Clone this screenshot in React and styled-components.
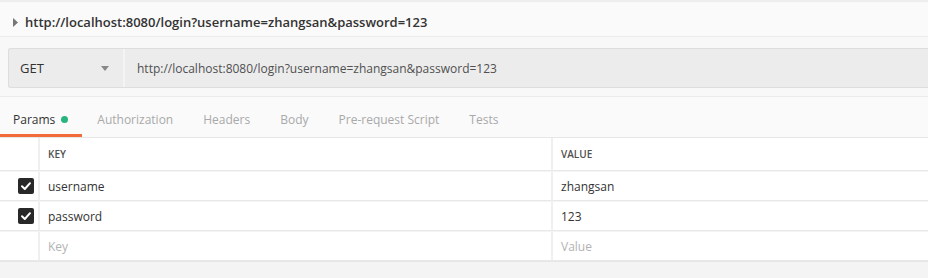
import React from 'react';
import styled, { createGlobalStyle } from 'styled-components';

// 전역 스타일
const GlobalStyle = createGlobalStyle`
    html, body {
        margin: 0;
        padding: 0;
        background: #f8f8f8;
        font-family: "Open Sans", "Liberation Sans", Arial, sans-serif;
        overflow: hidden;
    }
`;

const Page = styled.div`
    width: 928px;
    height: 278px;
    border-top: 2px solid #eeeeee;
    box-sizing: border-box;
    overflow: hidden;
`;

// 요청 이름 헤더
const Header = styled.div`
    height: 34px;
    margin-top: 1px;
    padding: 5px 0 0 13px;
    box-sizing: border-box;
    display: flex;
    align-items: center;
    gap: 6px;
    background: #fafafa;
    border-bottom: 1px solid #ebebeb;
    color: #333333;
    font-size: 13px;
    font-weight: 600;
`;

// URL 입력 바
const RequestBar = styled.div`
    margin: 11px 0 8px 8px;
    height: 38px;
    display: flex;
    background: #ececec;
    border: 1px solid #dddddd;
    border-right: none;
    border-radius: 3px 0 0 3px;
`;

const MethodSelect = styled.div`
    width: 116px;
    padding: 0 14px 0 11px;
    box-sizing: border-box;
    display: flex;
    align-items: center;
    justify-content: space-between;
    border-right: 2px solid #f4f4f4;
    color: #333333;
    font-size: 13px;
`;

const UrlText = styled.div`
    flex: 1;
    display: flex;
    align-items: center;
    padding-left: 12px;
    color: #505050;
    font-size: 12px;
`;

// 탭 목록
const TabList = styled.div`
    display: flex;
    height: 40px;
    background: #fafafa;
    border-top: 1px solid #ebebeb;
    border-bottom: 1px solid #e6e6e6;
`;

const Tab = styled.div`
    display: flex;
    align-items: center;
    gap: 6px;
    padding: 8px 15px 0;
    font-size: 12px;
    color: ${p => (p.active ? '#333333' : '#a9a9a9')};
    border-bottom: 3px solid ${p => (p.active ? '#f26b3a' : 'transparent')};
    &:first-child {
        padding-left: 13px;
        padding-right: 14px;
    }
`;

const Dot = styled.span`
    width: 7px;
    height: 7px;
    border-radius: 50%;
    background: #26b47f;
`;

// 파라미터 테이블
const Table = styled.div`
    display: grid;
    grid-template-columns: 38px 513px 1fr;
    background: #ffffff;
`;

const Cell = styled.div`
    height: ${p => (p.head ? '32px' : '28px')};
    display: flex;
    align-items: center;
    justify-content: ${p => (p.check ? 'flex-end' : 'flex-start')};
    padding: ${p => (p.check ? '0 4px 0 0' : '0 0 0 8px')};
    border-left: ${p => (p.check ? 'none' : '2px solid #efefef')};
    border-bottom: 1px solid #e8e8e8;
    border-top: ${p => (p.head ? 'none' : '1px solid #f4f4f4')};
    font-size: ${p => (p.head ? '10px' : '12px')};
    font-weight: ${p => (p.head ? 600 : 400)};
    color: ${p => (p.placeholder ? '#b3b3b3' : p.head ? '#505050' : '#333333')};
`;

const CheckBox = styled.span`
    width: 16px;
    height: 16px;
    border-radius: 2px;
    background: #282828;
    display: flex;
    align-items: center;
    justify-content: center;
`;

const Footer = styled.div`
    height: 20px;
    background: #f4f4f4;
    border-top: 1px solid #e6e6e6;
`;

function Check() {
    return (
        <CheckBox>
            <svg width="12" height="12" viewBox="0 0 12 12">
                <path d="M2 6.3 L4.8 9 L10 3.2" fill="none" stroke="#ffffff" strokeWidth="2" strokeLinecap="round" strokeLinejoin="round" />
            </svg>
        </CheckBox>
    );
}

const url = 'http://localhost:8080/login?username=zhangsan&password=123';

const params = [
    { key: 'username', value: 'zhangsan', checked: true },
    { key: 'password', value: '123', checked: true },
];

const tabs = ['Authorization', 'Headers', 'Body', 'Pre-request Script', 'Tests'];

export default function App() {
    return (
        <>
            <GlobalStyle />
            <Page>
                <Header>
                    <svg width="6" height="9" viewBox="0 0 6 9">
                        <path d="M0 0 L5 4.5 L0 9 Z" fill="#777777" />
                    </svg>
                    <span>{url}</span>
                </Header>
                <RequestBar>
                    <MethodSelect>
                        <span>GET</span>
                        <svg width="8" height="5" viewBox="0 0 8 5">
                            <path d="M0 0 L8 0 L4 5 Z" fill="#888888" />
                        </svg>
                    </MethodSelect>
                    <UrlText>{url}</UrlText>
                </RequestBar>
                <TabList>
                    <Tab active>Params <Dot /></Tab>
                    {tabs.map(t => <Tab key={t}>{t}</Tab>)}
                </TabList>
                <Table>
                    <Cell head check />
                    <Cell head>KEY</Cell>
                    <Cell head>VALUE</Cell>
                    {params.map(p => (
                        <React.Fragment key={p.key}>
                            <Cell check>{p.checked && <Check />}</Cell>
                            <Cell>{p.key}</Cell>
                            <Cell>{p.value}</Cell>
                        </React.Fragment>
                    ))}
                    <Cell check />
                    <Cell placeholder>Key</Cell>
                    <Cell placeholder>Value</Cell>
                </Table>
                <Footer />
            </Page>
        </>
    );
}
